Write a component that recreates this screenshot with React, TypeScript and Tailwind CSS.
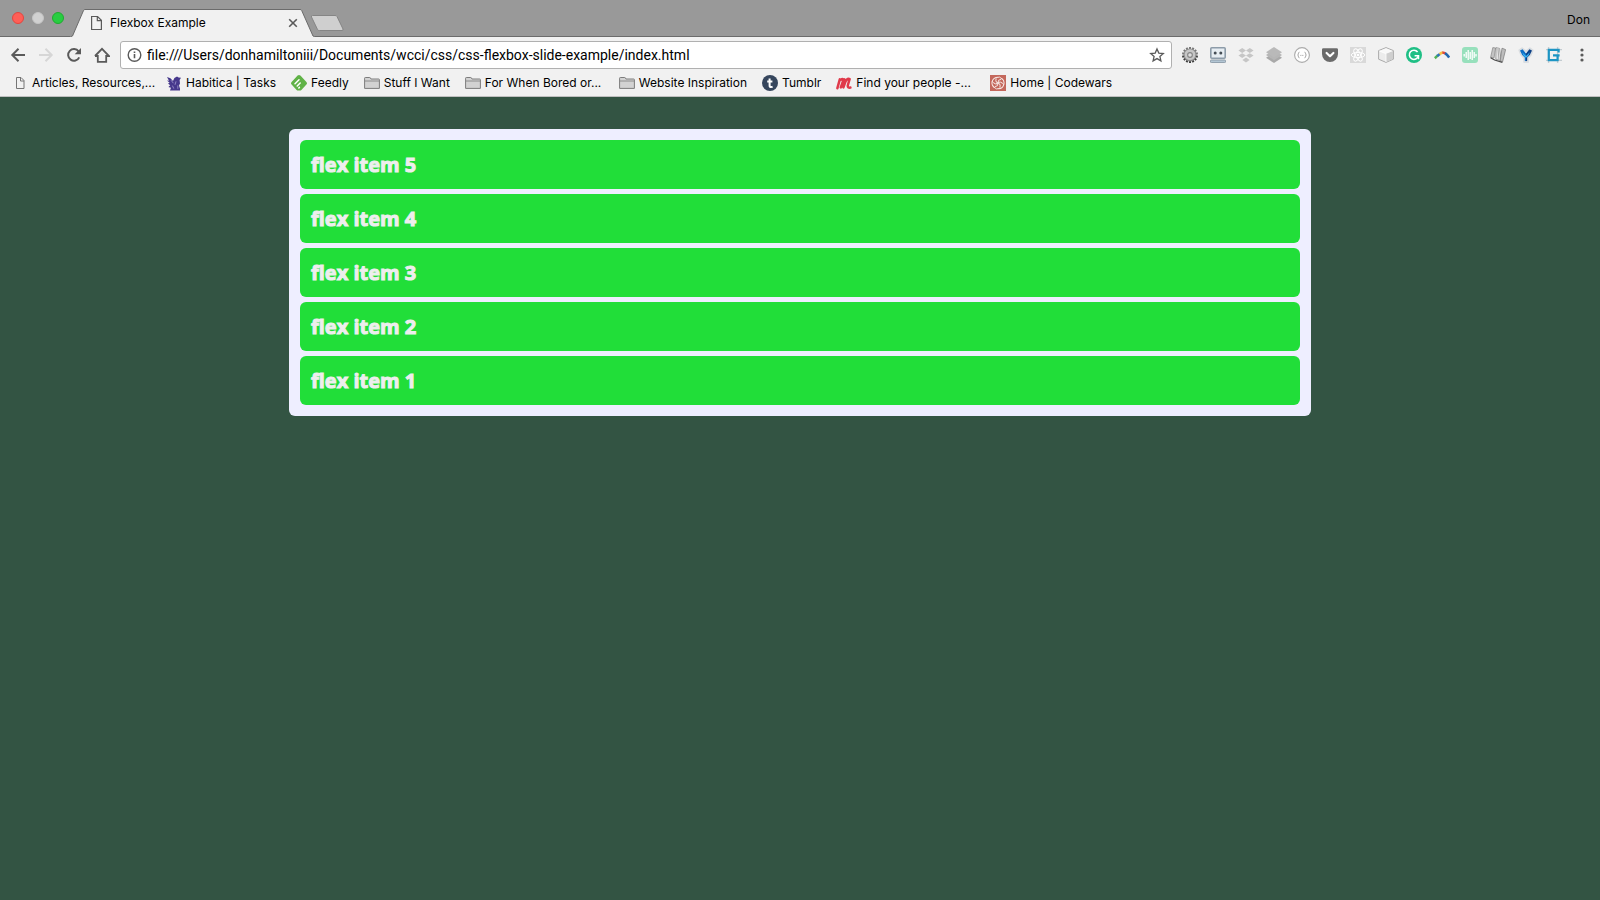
import type { ReactNode } from 'react';

function Icon({ children, className = '' }: { children: ReactNode; className?: string }) {
  return (
    <svg viewBox="0 0 16 16" className={`size-4 shrink-0 ${className}`} fill="none" aria-hidden="true">
      {children}
    </svg>
  );
}

const navigation: { label: string; icon: ReactNode; disabled?: boolean }[] = [
  { label: 'Back', icon: <path d="M15 8H2.5M8.5 1.8 2.3 8l6.2 6.2" stroke="#5a5a5a" strokeWidth="2" /> },
  { label: 'Forward', disabled: true, icon: <path d="M1 8h12.5M7.5 1.8 13.7 8l-6.2 6.2" stroke="#d6d6d6" strokeWidth="2" /> },
  {
    label: 'Reload',
    icon: (
      <>
        <path d="M13.2 10.3A5.8 5.8 0 1 1 12.6 4.4" stroke="#5a5a5a" strokeWidth="2" />
        <path d="M15 1v6.3H8.7z" fill="#5a5a5a" />
      </>
    ),
  },
  { label: 'Home', icon: <path d="M3.8 8v6.8h8.4V8M1 9l7-7.2L15 9h-2.8M3.8 9H1" stroke="#5a5a5a" strokeWidth="1.8" /> },
];

const gearTeeth = Array.from({ length: 14 }, (_, i) => i * (360 / 14));

const extensions: { label: string; icon: ReactNode }[] = [
  {
    label: 'Settings gear',
    icon: (
      <>
        {gearTeeth.map((a) => (
          <rect key={a} x="7" y="0" width="2" height="4" fill={a > 90 && a < 270 ? '#3d3d3d' : '#777'} transform={`rotate(${a} 8 8)`} />
        ))}
        <circle cx="8" cy="8" r="6.4" fill="#8b8b8b" />
        <circle cx="8" cy="7.6" r="5.4" fill="#c6c6c6" />
        <circle cx="8" cy="8" r="2.9" fill="#858585" />
        <circle cx="8" cy="8" r="1.8" fill="#dedede" />
      </>
    ),
  },
  {
    label: 'Robot',
    icon: (
      <>
        <rect x=".8" y=".8" width="14.4" height="10.4" rx="1" fill="#e6edf2" stroke="#8d9ca9" strokeWidth="1.6" />
        <circle cx="5.2" cy="6" r="1.5" fill="#454d55" />
        <circle cx="10.8" cy="6" r="1.5" fill="#454d55" />
        <rect x=".5" y="13" width="15" height="2.6" rx=".8" fill="#b3c6d4" stroke="#8d9ca9" />
      </>
    ),
  },
  {
    label: 'Dropbox',
    icon: (
      <path
        d="M4.2 1 8 3.4 4.2 5.9.4 3.4zM11.8 1l3.8 2.4-3.8 2.5L8 3.4zM4.2 6.2 8 8.6 4.2 11 .4 8.6zM11.8 6.2l3.8 2.4-3.8 2.4L8 8.6zM8 10.4l3.6 2.6L8 15.4 4.4 13z"
        fill="#c6c6c6"
      />
    ),
  },
  {
    label: 'Buffer',
    icon: (
      <>
        <path d="M8 5.6 16 10.8 8 16 0 10.8z" fill="#a9a9a9" />
        <path d="M8 2.8 16 8 8 13.2 0 8z" fill="#b6b6b6" />
        <path d="M8 0l8 5.2-8 5.2L0 5.2z" fill="#b9b9b9" />
      </>
    ),
  },
  {
    label: 'JSON viewer',
    icon: (
      <>
        <circle cx="8" cy="8" r="7.4" fill="#fff" stroke="#aaa" strokeWidth="1.1" />
        <path d="M5.4 5.2c-1.4 0-.6 2.3-1.8 2.8 1.2.5.4 2.8 1.8 2.8M10.6 5.2c1.4 0 .6 2.3 1.8 2.8-1.2.5-.4 2.8-1.8 2.8" stroke="#999" />
        <path d="M6.3 8.4h3.4" stroke="#aaa" strokeDasharray="1 .5" />
      </>
    ),
  },
  {
    label: 'Pocket',
    icon: (
      <>
        <path d="M1.4 1.2h13.2q1.4 0 1.4 1.4V7a8 8 0 0 1-16 0V2.6q0-1.4 1.4-1.4z" fill="#6b6b6b" />
        <path d="M4.6 6 8 9.2 11.4 6" stroke="#fff" strokeWidth="2.2" strokeLinecap="round" strokeLinejoin="round" />
      </>
    ),
  },
  {
    label: 'React developer tools',
    icon: (
      <>
        <rect width="16" height="16" fill="#d9d9d9" />
        <g stroke="#fff" strokeWidth="1">
          <ellipse cx="8" cy="8" rx="6.8" ry="2.6" />
          <ellipse cx="8" cy="8" rx="6.8" ry="2.6" transform="rotate(60 8 8)" />
          <ellipse cx="8" cy="8" rx="6.8" ry="2.6" transform="rotate(120 8 8)" />
        </g>
        <circle cx="8" cy="8" r="1.3" fill="#fff" />
      </>
    ),
  },
  {
    label: 'Cube',
    icon: (
      <>
        <path d="M8 .6 15.4 3.6v8.6L8 15.4.6 12.2V3.6z" fill="#ececec" stroke="#aaa" strokeLinejoin="round" />
        <path d="M8 6.8 15 4v8L8 15z" fill="#cfcfcf" />
        <path d="M8 1.2 14.6 4 8 6.8 1.4 4z" fill="#f8f8f8" />
        <path d="M1.4 4 8 6.8V15" stroke="#fff" strokeWidth=".8" />
      </>
    ),
  },
  {
    label: 'Grammarly',
    icon: (
      <>
        <circle cx="8" cy="8" r="8" fill="#1fbf85" />
        <path d="M11.6 5A4.6 4.6 0 1 0 12.4 9" stroke="#fff" strokeWidth="1.6" />
        <path d="M8.6 8.8h3.9v3.4" stroke="#fff" strokeWidth="1.5" />
      </>
    ),
  },
  {
    label: 'Boomerang',
    icon: (
      <g strokeWidth="2.6">
        <path d="M.8 11.2 3.8 8.4" stroke="#52b356" />
        <path d="M3.2 9 6.2 6.8" stroke="#2d74bd" />
        <path d="M5.6 7.2Q7.4 5.6 9 5.5" stroke="#f6c244" />
        <path d="M8.4 5.5q1.8.1 3 1.1" stroke="#e3483c" />
        <path d="M11 6.2q2.4 1.6 4.2 4.4" stroke="#2467ae" />
      </g>
    ),
  },
  {
    label: 'Sound wave',
    icon: (
      <>
        <rect width="16" height="16" rx="3" fill="#97e0bc" />
        <path d="M2.2 7v2.4M4.2 5v6M6.2 3v10M8.2 5v7M10.2 3v10M12.2 5v6M14 7v2.4" stroke="#fff" strokeWidth="1.3" />
      </>
    ),
  },
  {
    label: 'Columns',
    icon: (
      <>
        <path d="M2.8 .6 5.6 1 4 11 .6 10.4z" fill="#c4c4c4" stroke="#858585" strokeWidth=".7" />
        <path d="M6 .6 9.6 1.4l1.6 12.4-5.4-1.6z" fill="#e2e2e2" stroke="#858585" strokeWidth=".7" />
        <path d="M12 1.2l3.6 1.4L12.6 14.8l-2.4-1z" fill="#bdbdbd" stroke="#777" strokeWidth=".7" />
        <path d="M8 2l1 10.8" stroke="#aaa" />
        <path d="M.6 10.8 4.6 13l7.8 2.4" stroke="#4a4a4a" strokeWidth="1.2" />
      </>
    ),
  },
  {
    label: 'Vimium',
    icon: (
      <>
        <path d="M1.4 3.4 4.2 1.4 8 4.6l3.8-3.2 2.8 2L12.6 8 10 11v4H6.2v-4L3.4 8z" fill="#fff" stroke="#d9dde1" strokeWidth="2" strokeLinejoin="round" />
        <path d="M2 3.6 4.6 2.2 8 6.4v7.8L6.8 13.8V10.6L4.2 8z" fill="#0d6cc4" />
        <path d="M14 3.6 11.4 2.2 8 6.4v7.8l1.2-.4V10.6L11.8 8z" fill="#0b3f86" />
        <path d="M4.2 5.2 8 9l3.8-3.8L10.2 9 8 10.8 5.8 9z" fill="#39b4f2" />
      </>
    ),
  },
  {
    label: 'Grid',
    icon: (
      <>
        <path d="M0 2.6h16M0 13.4h16M2.6 0v16M11.6 0v16" stroke="#c3cbd0" strokeWidth="1.4" />
        <path d="M12.6 5.4V2.8H2.8V13.2H11.6V8.4M7 8.4h6.6" stroke="#1d95c4" strokeWidth="2.2" />
      </>
    ),
  },
];

const pageIcon = <path d="M4.5 2.5h4.5l3 3v8h-7.500zM8.500 2.500v3.500h3.500" stroke="#757575" />;

const folderIcon = (
  <>
    <path d="M.6 13.4V3.2q0-.7.7-.7h4.4q.6 0 .8.6l.4.9h7.8q.7 0 .7.7v8.7z" fill="#d2d2d2" stroke="#7c7c7c" />
    <path d="M1 6h14" stroke="#7c7c7c" strokeWidth=".8" />
  </>
);

const bookmarks: { label: string; icon: ReactNode; folder?: boolean; clipped?: boolean }[] = [
  { label: 'Articles, Resources,...', icon: pageIcon, clipped: true },
  {
    label: 'Habitica | Tasks',
    icon: (
      <>
        <path d="M1 2l3.4 1.2L7 6l1.4-3L11 1.4l1.6 1 2.4.4-1.4 2.2.4 3.4-1 2 1 3.2v1.8H4l1-2.6L2.4 12l1.8-1.8L2 8.4l1.6-.6L1 5.6l2 .2z" fill="#46388c" />
        <path d="M10 6.4 9 9.8M6.4 10.6l1.4 3M11.8 10.4v3.4M5 5.2l2.4 3" stroke="#a39bd0" strokeWidth=".8" />
      </>
    ),
  },
  {
    label: 'Feedly',
    icon: (
      <>
        <path d="M6.6.6q1.4-1.2 2.8 0l6 6.4q1.2 1.3 0 2.6l-5 5.3q-.6.7-1.5.7H7.1q-.9 0-1.5-.7l-5-5.3q-1.2-1.3 0-2.6z" fill="#60b247" />
        <path d="M4 8.8 8 4.8M6.2 11l3-3M7.8 13l.6-.6" stroke="#fff" strokeWidth="1.5" strokeLinecap="round" />
      </>
    ),
  },
  { label: 'Stuff I Want', icon: folderIcon, folder: true },
  { label: 'For When Bored or...', icon: folderIcon, folder: true, clipped: true },
  { label: 'Website Inspiration', icon: folderIcon, folder: true },
  {
    label: 'Tumblr',
    icon: (
      <>
        <circle cx="8" cy="8" r="8" fill="#36465d" />
        <path d="M7.6 3.4v7q0 1.6 1.6 1.6.8 0 1.4-.3M5.2 6.6h5.2" stroke="#fff" strokeWidth="2" />
      </>
    ),
  },
  {
    label: 'Find your people -...',
    clipped: true,
    icon: (
      <path
        d="M1.4 13.2 3.8 4.4M4.8 12.4 7 6.2Q8.2 3 8.8 5L7.4 9.4M7.4 12.4 9.6 6.4Q12 2.6 13.6 4.2L11.8 10.4Q11.4 13 14.4 12.6M3.8 5.4Q6 3.4 7.4 4.6"
        stroke="#e0394a"
        strokeWidth="2.5"
        strokeLinecap="round"
      />
    ),
  },
  {
    label: 'Home | Codewars',
    icon: (
      <>
        <rect width="16" height="16" fill="#c4685c" />
        <g stroke="#f6e4e0" strokeWidth="1">
          {[0, 60, 120, 180, 240, 300].map((a) => (
            <path key={a} d="M8 8Q7.6 4.4 11 4.4M5.6 2.6Q10 .6 12.8 4.6" transform={`rotate(${a} 8 8)`} />
          ))}
        </g>
      </>
    ),
  },
];

const items = ['flex item 1', 'flex item 2', 'flex item 3', 'flex item 4', 'flex item 5'];

function TabStrip() {
  return (
    <div className="flex h-[37px] items-end border-b border-[#6b6b6b] bg-[#999999] pr-[10px] pl-3">
      <div className="mr-[6px] flex gap-2 self-center">
        <button aria-label="Close window" className="size-3 rounded-full border border-[#e2463f] bg-[#ff5f57]" />
        <button aria-label="Minimise window" className="size-3 rounded-full border border-[#c4c4c4] bg-[#d1d1d1]" />
        <button aria-label="Zoom window" className="size-3 rounded-full border border-[#1fab2f] bg-[#28cd41]" />
      </div>
      <div className="relative -mb-px flex h-7 w-[244px] items-center pr-[13px] pl-[18px]">
        <svg viewBox="0 0 244 28" className="absolute inset-0 h-7 w-[244px] overflow-visible" aria-hidden="true">
          <path d="M0 28 2.5 27 13.5 1.5Q14 .5 15 .5H230Q231.3 .5 231.7 1.5L243 27 245 28Z" fill="#f1f1f1" />
          <path d="M1 27.5 2.5 27 13.5 1.5Q14 .5 15 .5H230Q231.3 .5 231.7 1.5L243 27 244.5 27.5" fill="none" stroke="#6b6b6b" />
        </svg>
        <Icon className="relative">
          <path d="M3.6 1.5h6l3.8 3.8v9.2H3.6zM9.3 1.5v4.1h4.1" stroke="#5a5a5a" strokeWidth="1.2" />
        </Icon>
        <span className="relative ml-[6px] flex-1 text-xs">Flexbox Example</span>
        <button aria-label="Close tab" className="relative">
          <Icon>
            <path d="M4.2 4.2l7.6 7.6M11.8 4.2l-7.6 7.6" stroke="#5a5a5a" strokeWidth="1.6" />
          </Icon>
        </button>
      </div>
      <button aria-label="New tab" className="relative -ml-1 self-center pt-[10px]">
        <svg viewBox="0 0 34 17" className="h-[17px] w-[34px]" aria-hidden="true">
          <path d="M2.5 .5H25Q26.5 .5 27 1.5L33 14Q33.5 15.5 32 15.5H9.5Q8 15.5 7.5 14.5L1.5 2Q1 .5 2.5 .5Z" fill="#cfcfcf" stroke="#858585" />
        </svg>
      </button>
      <button className="ml-auto self-center pt-1 text-xs">Don</button>
    </div>
  );
}

function Toolbar() {
  return (
    <div className="flex items-center gap-[10px] px-[10px] pt-1 pb-px">
      <nav aria-label="History" className="flex gap-3">
        {navigation.map((n) => (
          <button key={n.label} aria-label={n.label} disabled={n.disabled}>
            <Icon>{n.icon}</Icon>
          </button>
        ))}
      </nav>
      <div className="flex h-7 min-w-0 flex-1 items-center rounded-[3px] border border-[#b0b0b0] bg-white px-[6px]">
        <Icon>
          <circle cx="7.5" cy="8" r="6.3" stroke="#5a5a5a" strokeWidth="1.4" />
          <path d="M7.5 7v4.3M7.5 4.4v1.6" stroke="#5a5a5a" strokeWidth="1.6" />
        </Icon>
        <input
          aria-label="Address"
          className="ml-1 min-w-0 flex-1 bg-transparent font-[Roboto,sans-serif] text-sm text-black outline-none"
          defaultValue="file:///Users/donhamiltoniii/Documents/wcci/css/css-flexbox-slide-example/index.html"
        />
        <button aria-label="Bookmark this page">
          <Icon>
            <path d="M8 1.9 9.8 6.1 14.3 6.5 10.9 9.5 11.9 13.9 8 11.6 4.1 13.9 5.1 9.5 1.7 6.5 6.2 6.1z" stroke="#5a5a5a" strokeWidth="1.3" />
          </Icon>
        </button>
      </div>
      <div className="flex gap-3">
        {extensions.map((e) => (
          <button key={e.label} aria-label={e.label}>
            <Icon>{e.icon}</Icon>
          </button>
        ))}
        <button aria-label="Menu">
          <Icon>
            <g fill="#5a5a5a">
              <circle cx="8" cy="3" r="1.6" />
              <circle cx="8" cy="8" r="1.6" />
              <circle cx="8" cy="13" r="1.6" />
            </g>
          </Icon>
        </button>
      </div>
    </div>
  );
}

function BookmarksBar() {
  return (
    <nav aria-label="Bookmarks" className="flex h-[27px] items-center border-b border-[#c0c0c0] pl-3 text-xs whitespace-nowrap">
      {bookmarks.map((b) => {
        const size = b.clipped ? 'w-[154px]' : 'pr-[15px]';
        const content = (
          <>
            <Icon>{b.icon}</Icon>
            {b.label}
          </>
        );
        return b.folder ? (
          <button key={b.label} className={`flex items-center gap-1 ${size}`}>{content}</button>
        ) : (
          <a key={b.label} href="#" className={`flex items-center gap-1 ${size}`}>{content}</a>
        );
      })}
    </nav>
  );
}

export default function App() {
  return (
    <div className="flex min-h-screen flex-col bg-[#335443] font-[Inter,sans-serif] text-black">
      <header className="bg-[#f1f1f1]">
        <TabStrip />
        <Toolbar />
        <BookmarksBar />
      </header>
      <main className="flex-1 py-8">
        <ul className="mx-auto flex max-w-[1022px] flex-col-reverse gap-[5px] rounded-[6px] bg-[#eeeeff] p-[11px]">
          {items.map((item) => (
            <li
              key={item}
              className="rounded-[6px] bg-[#21de39] px-[11px] py-[9px] font-['Open_Sans',sans-serif] text-xl leading-[31px] font-bold text-[#eeeeee] [-webkit-text-stroke:1px_#eeeeee]"
            >
              {item}
            </li>
          ))}
        </ul>
      </main>
    </div>
  );
}
